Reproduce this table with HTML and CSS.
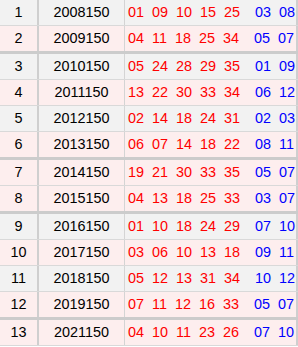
FILE: index.html
```html
<!DOCTYPE html>
<html>
<head>
<meta charset="utf-8">
<link rel="stylesheet" href="styles.css">
</head>
<body>
<div class="tbl">
  <div class="row g"><div class="c1">1</div><div class="c2">2008150</div><div class="c3"><span class="red">01 09 10 15 25</span><span class="blue">03 08</span></div></div>
  <div class="row p sep"><div class="c1">2</div><div class="c2">2009150</div><div class="c3"><span class="red">04 11 18 25 34</span><span class="blue">05 07</span></div></div>
  <div class="row g"><div class="c1">3</div><div class="c2">2010150</div><div class="c3"><span class="red">05 24 28 29 35</span><span class="blue">01 09</span></div></div>
  <div class="row p"><div class="c1">4</div><div class="c2">2011150</div><div class="c3"><span class="red">13 22 30 33 34</span><span class="blue">06 12</span></div></div>
  <div class="row g"><div class="c1">5</div><div class="c2">2012150</div><div class="c3"><span class="red">02 14 18 24 31</span><span class="blue">02 03</span></div></div>
  <div class="row p sep"><div class="c1">6</div><div class="c2">2013150</div><div class="c3"><span class="red">06 07 14 18 22</span><span class="blue">08 11</span></div></div>
  <div class="row p"><div class="c1">7</div><div class="c2">2014150</div><div class="c3"><span class="red">19 21 30 33 35</span><span class="blue">05 07</span></div></div>
  <div class="row p sep"><div class="c1">8</div><div class="c2">2015150</div><div class="c3"><span class="red">04 13 18 25 33</span><span class="blue">03 07</span></div></div>
  <div class="row g"><div class="c1">9</div><div class="c2">2016150</div><div class="c3"><span class="red">01 10 18 24 29</span><span class="blue">07 10</span></div></div>
  <div class="row p"><div class="c1">10</div><div class="c2">2017150</div><div class="c3"><span class="red">03 06 10 13 18</span><span class="blue">09 11</span></div></div>
  <div class="row g"><div class="c1">11</div><div class="c2">2018150</div><div class="c3"><span class="red">05 12 13 31 34</span><span class="blue">10 12</span></div></div>
  <div class="row p sep"><div class="c1">12</div><div class="c2">2019150</div><div class="c3"><span class="red">07 11 12 16 33</span><span class="blue">05 07</span></div></div>
  <div class="row p"><div class="c1">13</div><div class="c2">2021150</div><div class="c3"><span class="red">04 10 11 23 26</span><span class="blue">07 10</span></div></div>
</div>
</body>
</html>
```
FILE: styles.css
```css
html, body {
  margin: 0;
  padding: 0;
  background: #ffffff;
}
.tbl {
  width: 298px;
  font-family: "Liberation Sans", Arial, sans-serif;
  font-size: 14.4px;
  word-spacing: 4px;
  color: #000;
}
.row {
  display: flex;
  height: 25px;
  border-bottom: 1px solid #d9d9d9;
  line-height: 25px;
  white-space: pre;
}
.row.sep {
  border-bottom: 3px solid #cccccc;
}
.row.g { background: #f2f2f2; }
.row.p { background: #fdeeee; }
.c1 {
  width: 37px;
  text-align: center;
  border-right: 2px solid #cfcfcf;
}
.c2 {
  width: 85px;
  text-align: center;
  border-right: 1px solid #d4d4d4;
}
.c3 {
  flex: 1;
  padding-left: 3px;
  border-right: 2px solid #cfcfcf;
}
.red { color: #ff0000; }
.blue { color: #0000ff; margin-left: 15px; }
```
